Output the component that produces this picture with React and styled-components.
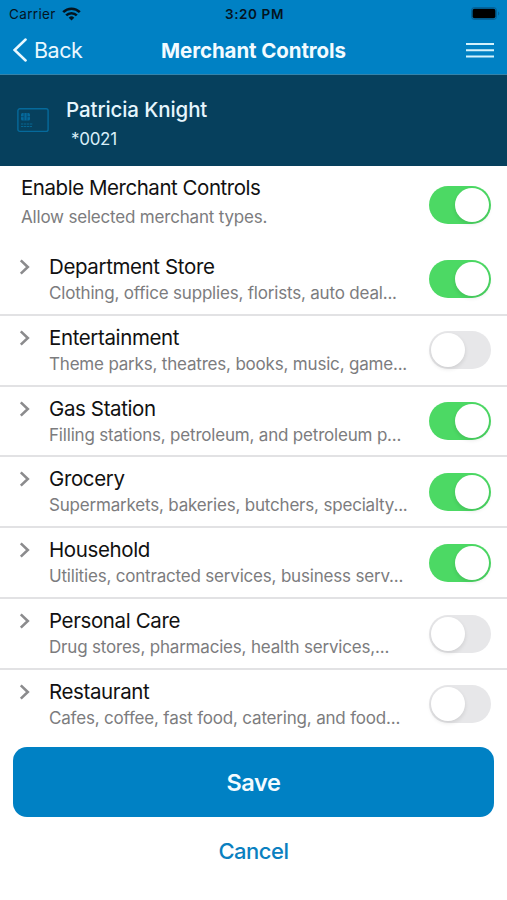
import React, { useState } from 'react';
import styled, { createGlobalStyle } from 'styled-components';

const GlobalStyle = createGlobalStyle`
  * {
    box-sizing: border-box;
  }

  body {
    margin: 0;
    background: #fff;
    font-family: Inter, "Liberation Sans", sans-serif;
    overflow: hidden;
  }

  button {
    border: 0;
    padding: 0;
    background: none;
    font-family: inherit;
    cursor: pointer;
  }
`;

const Screen = styled.div`
  width: 507px;
  height: 900px;
  display: flex;
  flex-direction: column;
  overflow: hidden;
`;

const Header = styled.header`
  height: 75px;
  flex: none;
  background: #0081c4;
  border-bottom: 1.5px solid #3583aa;
`;

const StatusBar = styled.div`
  height: 27px;
  display: grid;
  grid-template-columns: 1fr auto 1fr;
  align-items: center;
  padding: 0 7px 0 9px;
  color: #04141f;
  font-size: 13px;
`;

const Carrier = styled.div`
  display: flex;
  align-items: center;
  gap: 6px;
  font-size: 13.5px;
  letter-spacing: 0.35px;
`;

const Time = styled.div`
  font-size: 13.5px;
  font-weight: 600;
  letter-spacing: 0.6px;
`;

const BatteryIcon = styled.svg`
  justify-self: end;
`;

const NavBar = styled.div`
  height: 46px;
  display: grid;
  grid-template-columns: 1fr auto 1fr;
  align-items: center;
  padding: 0 13px 0 13px;
`;

const BackButton = styled.button`
  display: flex;
  align-items: center;
  gap: 7px;
  color: #e9f8ff;
  font-size: 21.5px;
  letter-spacing: -0.5px;
`;

const Title = styled.h1`
  margin: 0;
  color: #f2fbff;
  font-size: 20.5px;
  font-weight: 650;
  letter-spacing: -0.1px;
`;

const MenuButton = styled.button`
  justify-self: end;
  display: flex;
`;

const CardBanner = styled.section`
  height: 90.5px;
  flex: none;
  display: flex;
  align-items: center;
  gap: 17px;
  padding: 0 17px;
  background: #06405d;
`;

const CardText = styled.div`
  padding-top: 10px;
`;

const CardHolder = styled.div`
  color: #e6f6fd;
  font-size: 20.5px;
  font-weight: 550;
  line-height: 28px;
  letter-spacing: -0.1px;
`;

const CardNumber = styled.div`
  padding-left: 5px;
  color: #d9eef8;
  font-size: 17px;
  line-height: 30px;
  letter-spacing: -0.3px;
`;

const Row = styled.div`
  height: ${({ $main }) => ($main ? '79.4px' : '70.85px')};
  flex: none;
  display: flex;
  align-items: center;
  padding-right: 16px;
  padding-left: ${({ $main }) => ($main ? '21px' : '19px')};
  border-bottom: ${({ $main, $last }) => ($main ? '0' : `2px solid ${$last ? 'transparent' : '#e2e2e4'}`)};
`;

const Arrow = styled.svg`
  flex: none;
  align-self: flex-start;
  margin: 14px 19px 0 0;
`;

const RowText = styled.div`
  flex: 1;
  min-width: 0;
  padding-bottom: ${({ $main }) => ($main ? '4px' : '1px')};
`;

const RowTitle = styled.div`
  color: #111;
  font-size: 20.5px;
  line-height: 28px;
  letter-spacing: ${({ $tight }) => ($tight ? '-0.46px' : '-0.38px')};
`;

const RowInfo = styled.div`
  color: #7c7c7e;
  font-size: 17px;
  line-height: ${({ $tall }) => ($tall ? '30px' : '24px')};
  white-space: nowrap;
  letter-spacing: -0.19px;
`;

const Switch = styled.button`
  width: 62.5px;
  height: 38px;
  flex: none;
  display: flex;
  align-items: center;
  justify-content: ${({ $on }) => ($on ? 'flex-end' : 'flex-start')};
  padding: 2px;
  border-radius: 19px;
  background: ${({ $on }) => ($on ? '#4cd964' : '#e7e7e9')};
`;

const Knob = styled.span`
  width: 34px;
  height: 34px;
  border-radius: 50%;
  background: #fff;
  box-shadow: 0 2px 4px rgba(0, 0, 0, 0.11);
`;

const Actions = styled.div`
  display: flex;
  flex-direction: column;
  align-items: stretch;
  padding: 6px 13px 0;
`;

const SaveButton = styled.button`
  height: 70px;
  padding-top: 1px;
  border-radius: 14px;
  background: #0081c4;
  color: #f4fbff;
  font-size: 23.5px;
  font-weight: 600;
  letter-spacing: -0.4px;
`;

const CancelButton = styled.button`
  height: 68px;
  color: #0a80c0;
  font-size: 22px;
  font-weight: 550;
  letter-spacing: -0.5px;
`;

const categories = [
  { name: 'Department Store', info: 'Clothing, office supplies, florists, auto deal...', on: true },
  { name: 'Entertainment', info: 'Theme parks, theatres, books, music, game...', on: false },
  { name: 'Gas Station', info: 'Filling stations, petroleum, and petroleum p...', on: true },
  { name: 'Grocery', info: 'Supermarkets, bakeries, butchers, specialty...', on: true },
  { name: 'Household', info: 'Utilities, contracted services, business serv...', on: true },
  { name: 'Personal Care', info: 'Drug stores, pharmacies, health services,...', on: false },
  { name: 'Restaurant', info: 'Cafes, coffee, fast food, catering, and food...', on: false },
];

const Toggle = ({ on, label, onToggle }) => (
  <Switch $on={on} role="switch" aria-checked={on} aria-label={label} onClick={onToggle}>
    <Knob />
  </Switch>
);

const App = () => {
  const [enabled, setEnabled] = useState(true);
  const [active, setActive] = useState(categories.map((c) => c.on));

  return (
    <Screen>
      <GlobalStyle />
      <Header>
        <StatusBar>
          <Carrier>
            <span>Carrier</span>
            <svg width="19" height="14" viewBox="0 0 19 14" fill="none" stroke="#04141f" strokeWidth="2.6">
              <path d="M1.2 5.2a11.8 11.8 0 0 1 16.6 0" />
              <path d="M4.2 8.4a7.5 7.5 0 0 1 10.6 0" />
              <path d="M9.5 13.6 6.7 10.7a4 4 0 0 1 5.6 0z" fill="#04141f" stroke="none" />
            </svg>
          </Carrier>
          <Time>3:20 PM</Time>
          <BatteryIcon width="29" height="13" viewBox="0 0 29 13">
            <rect x="0.6" y="0.6" width="24.8" height="11.8" rx="3.4" fill="none" stroke="#04639a" strokeWidth="1.2" />
            <rect x="1.6" y="1.8" width="22.8" height="9.4" rx="2" fill="#000" />
            <path d="M27 4.5v4a2.2 2.2 0 0 0 0-4z" fill="#04639a" />
          </BatteryIcon>
        </StatusBar>
        <NavBar>
          <BackButton>
            <svg width="14" height="24" viewBox="0 0 14 24" fill="none" stroke="#e9f8ff" strokeWidth="2.5" strokeLinecap="round">
              <path d="M12.6 1.5 1.6 12l11 10.5" />
            </svg>
            Back
          </BackButton>
          <Title>Merchant Controls</Title>
          <MenuButton aria-label="Menu">
            <svg width="28" height="16" viewBox="0 0 28 16" stroke="#d3f2fc" strokeWidth="2">
              <path d="M0 2h28M0 8.2h28M0 14.4h28" />
            </svg>
          </MenuButton>
        </NavBar>
      </Header>

      <CardBanner>
        <svg width="32" height="25" viewBox="0 0 32 25" fill="none" stroke="#056a9c">
          <rect x="0.9" y="0.8" width="30.2" height="22.6" rx="2" strokeWidth="1.4" />
          <rect x="4" y="5" width="9" height="7.5" rx="1.5" fill="#056a9c" stroke="none" />
          <path d="M7 5v7.5M10 5v7.5M4 8.7h3M10 8.7h3" stroke="#06456a" strokeWidth="0.8" />
          <path d="M4 16h12M4 18.5h11" stroke="#066692" strokeDasharray="2.4 0.6" />
        </svg>
        <CardText>
          <CardHolder>Patricia Knight</CardHolder>
          <CardNumber>*0021</CardNumber>
        </CardText>
      </CardBanner>

      <Row $main>
        <RowText $main>
          <RowTitle $tight>Enable Merchant Controls</RowTitle>
          <RowInfo $tall>Allow selected merchant types.</RowInfo>
        </RowText>
        <Toggle on={enabled} label="Enable Merchant Controls" onToggle={() => setEnabled(!enabled)} />
      </Row>

      {categories.map((category, index) => (
        <Row key={category.name} $last={index === categories.length - 1}>
          <Arrow width="11" height="16" viewBox="0 0 11 16" fill="none" stroke="#8b8b8d" strokeWidth="2.6">
            <path d="M1.8 1.4 8.8 8l-7 6.6" />
          </Arrow>
          <RowText>
            <RowTitle>{category.name}</RowTitle>
            <RowInfo>{category.info}</RowInfo>
          </RowText>
          <Toggle
            on={active[index]}
            label={category.name}
            onToggle={() => setActive(active.map((value, i) => (i === index ? !value : value)))}
          />
        </Row>
      ))}

      <Actions>
        <SaveButton>Save</SaveButton>
        <CancelButton>Cancel</CancelButton>
      </Actions>
    </Screen>
  );
};

export default App;
